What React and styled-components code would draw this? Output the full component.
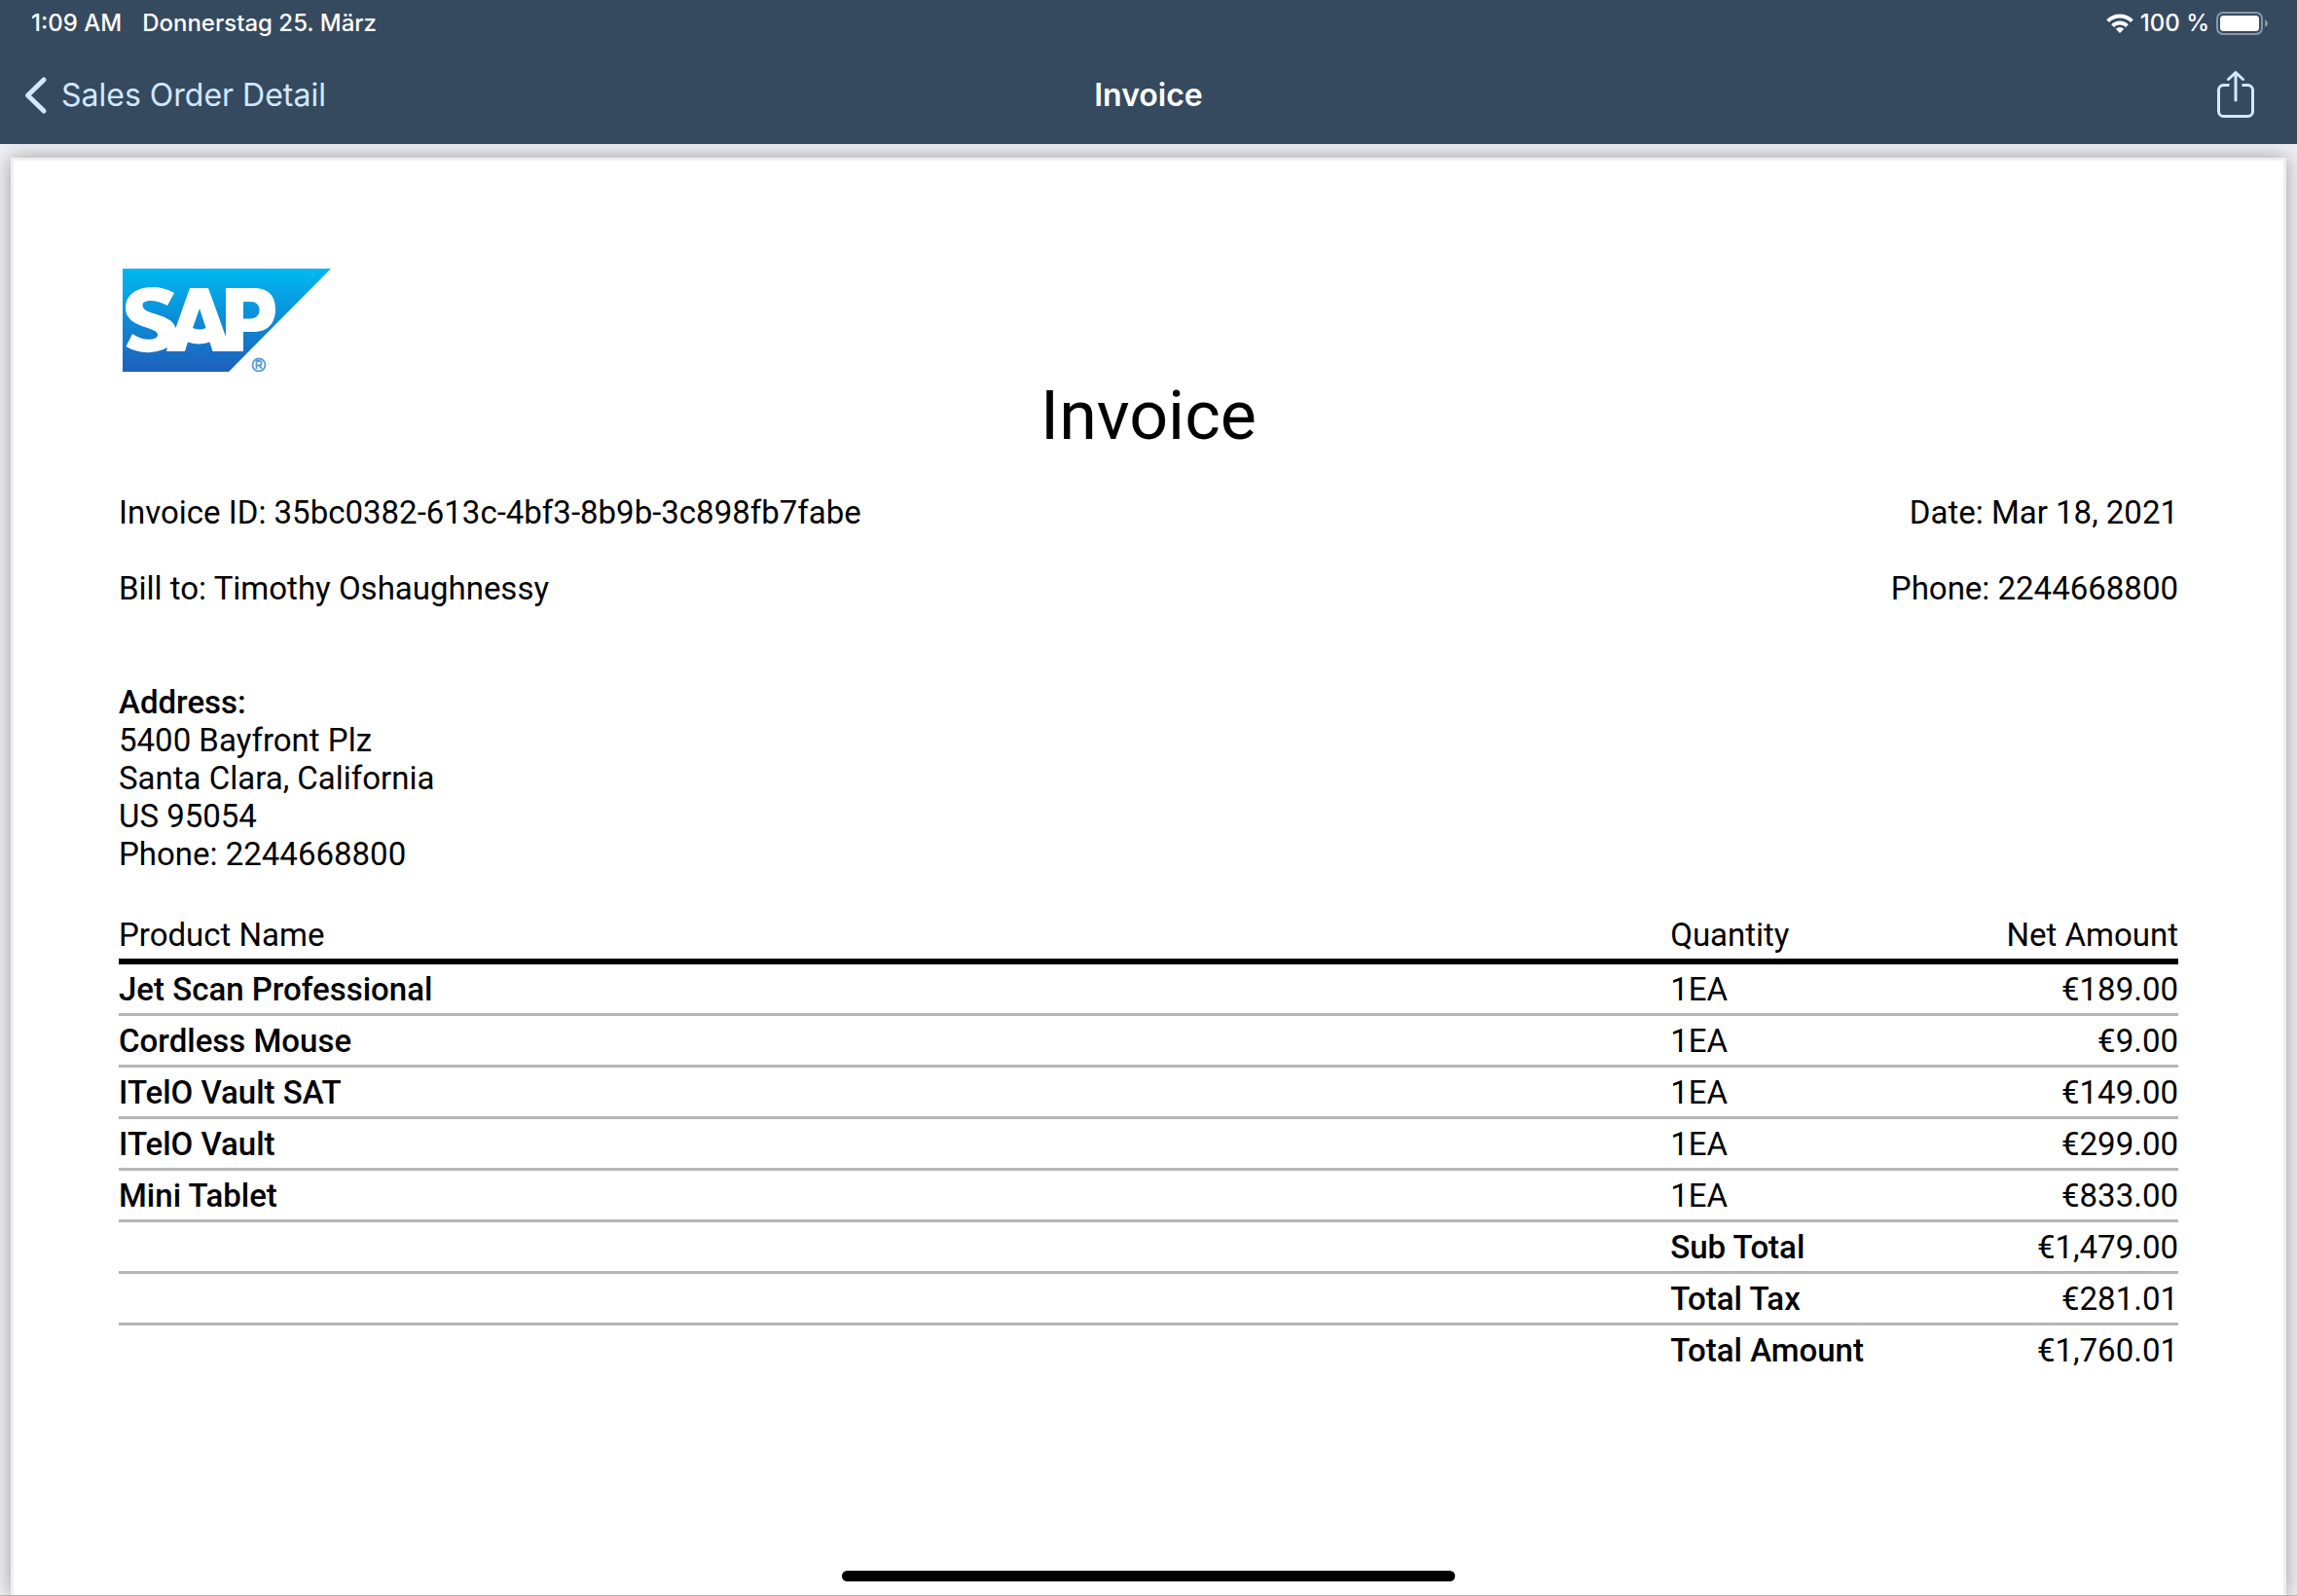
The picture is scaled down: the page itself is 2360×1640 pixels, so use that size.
import React from "react";
import styled, { createGlobalStyle } from "styled-components";

const GlobalStyle = createGlobalStyle`
  *, *::before, *::after { box-sizing: border-box; }
  html, body, #root { height: 100%; }
  body { margin: 0; background: #efeff4; }
`;

const Screen = styled.div`
  height: 100%;
  display: flex;
  flex-direction: column;
  overflow: hidden;
  background: #efeff4;
  color: #000;
  font-family: Roboto, sans-serif;
  font-size: 33px;
  line-height: 39px;
`;

const TopBar = styled.header`
  flex: none;
  background: #354a5f;
  color: #fff;
  font-family: Inter, sans-serif;
  position: relative;
  z-index: 1;
`;

const StatusBar = styled.div`
  display: flex;
  justify-content: space-between;
  align-items: center;
  height: 48px;
  padding: 0 30px 0 32px;
  font-size: 24px;
  line-height: 32px;
  font-weight: 500;
`;

const StatusGroup = styled.div`
  display: flex;
  align-items: center;
  gap: ${(p) => p.$gap}px;
`;

const NavBar = styled.nav`
  display: grid;
  grid-template-columns: 1fr auto 1fr;
  align-items: center;
  height: 100px;
  padding: 0 23px;
`;

const BackButton = styled.button`
  justify-self: start;
  display: flex;
  align-items: center;
  gap: 14px;
  padding: 0;
  border: 0;
  background: none;
  color: #d1e8ff;
  font: 400 32px/48px Inter, sans-serif;
`;

const NavTitle = styled.h1`
  margin: 0;
  font-size: 32px;
  line-height: 48px;
  font-weight: 600;
`;

const ShareButton = styled.button`
  justify-self: end;
  display: flex;
  padding: 0 21px;
  border: 0;
  background: none;
  color: #d1e8ff;
`;

const Viewer = styled.main`
  flex: 1;
  min-height: 0;
  display: flex;
  padding: 14px 11px 0;
`;

const Paper = styled.article`
  flex: 1;
  padding: 111px 108px 0;
  background: #fff;
  border: 3px solid #f0f0f0;
  border-bottom: 0;
  box-shadow: 0 0 20px rgba(0, 0, 0, 0.34);
`;

const DocTitle = styled.h2`
  margin: 4px 0 0;
  text-align: center;
  font-size: 70px;
  line-height: 82px;
  font-weight: 400;
`;

const Details = styled.section`
  display: grid;
  gap: 39px;
  margin-top: 39px;
`;

const DetailRow = styled.div`
  display: flex;
  justify-content: space-between;
`;

const Address = styled.address`
  margin-top: 78px;
  font-style: normal;
`;

const AddressLine = styled.div`
  font-weight: ${(p) => (p.$strong ? 500 : 400)};
`;

const Table = styled.table`
  width: 100%;
  margin-top: 41px;
  table-layout: fixed;
  border-collapse: separate;
  border-spacing: 0;
`;

const Col = styled.col`
  width: ${(p) => p.$width};
`;

const cell = `
  height: 53px;
  white-space: nowrap;
`;

const HeadCell = styled.th`
  ${cell}
  padding: 0 0 2px ${(p) => (p.$inset ? 22 : 0)}px;
  border-bottom: 6px solid #000;
  font-weight: 400;
  text-align: ${(p) => (p.$end ? "right" : "left")};
`;

const Cell = styled.td`
  ${cell}
  padding: 1px 0 0 ${(p) => (p.$inset ? 22 : 0)}px;
  border-bottom: 3px solid ${(p) => (p.$last ? "transparent" : "#b5b5b5")};
  font-weight: ${(p) => (p.$strong ? 500 : 400)};
  text-align: ${(p) => (p.$end ? "right" : "left")};
`;

const HomeIndicator = styled.div`
  position: fixed;
  left: 50%;
  bottom: 15px;
  width: 630px;
  height: 11px;
  margin-left: -315px;
  border-radius: 6px;
  background: #000;
`;

const BottomEdge = styled.div`
  position: fixed;
  left: 0;
  right: 0;
  bottom: 0;
  height: 1px;
  background: #b2b2b2;
`;

const LogoSvg = styled.svg`
  display: block;
  margin-left: 4px;
`;

function WifiIcon() {
  return (
    <svg width="28" height="20" viewBox="0 0 28 20" fill="none" stroke="#fff" strokeWidth="4">
      <path d="M1.6 7.6a17.6 17.6 0 0 1 24.8 0" />
      <path d="M6.6 12.6a10.5 10.5 0 0 1 14.8 0" />
      <path d="M14 20l-4.2-4.2a6 6 0 0 1 8.4 0z" fill="#fff" stroke="none" />
    </svg>
  );
}

function BatteryIcon() {
  return (
    <svg width="53" height="24" viewBox="0 0 53 24">
      <rect x="1" y="1" width="46" height="22" rx="6" fill="none" stroke="#8b97a3" strokeWidth="2" />
      <rect x="4" y="4" width="40" height="16" rx="3.5" fill="#fff" />
      <path d="M50 8.2c4 1.6 4 6 0 7.6z" fill="#8b97a3" />
    </svg>
  );
}

function ChevronIcon() {
  return (
    <svg width="26" height="40" viewBox="0 0 26 40" fill="none" stroke="currentColor" strokeWidth="5" strokeLinecap="round" strokeLinejoin="round">
      <path d="M22 4L5.500 20l16.500 16" />
    </svg>
  );
}

function ShareIcon() {
  return (
    <svg width="38" height="50" viewBox="0 1 38 50" fill="none" stroke="currentColor" strokeWidth="3" strokeLinecap="round" strokeLinejoin="round">
      <path d="M12.500 15.500H6.500a5 5 0 0 0-5 5V42.500a5 5 0 0 0 5 5h25a5 5 0 0 0 5-5V20.500a5 5 0 0 0-5-5H25.500" strokeLinecap="butt" />
      <path d="M19 31V2.500M11.500 9.500l7.500-7 7.500 7" />
    </svg>
  );
}

function Logo() {
  return (
    <LogoSvg width="215" height="106" viewBox="0 0 215 106" role="img" aria-label="SAP">
      <defs>
        <linearGradient id="sap" x1="0" y1="0" x2="0" y2="1">
          <stop offset="0" stopColor="#00b9f2" />
          <stop offset="0.5" stopColor="#0d8bd6" />
          <stop offset="1" stopColor="#1e5fbb" />
        </linearGradient>
      </defs>
      <path d="M0 0H214L109 106H0z" fill="url(#sap)" />
      <path
        fill="#fff"
        fillRule="evenodd"
        d="M53 25C43 19 33 18 24 19.500C10 21.500 3 30 3 40C3 51 11 56 21 59.500C30 62.500 36 64 36 68C36 74 21 75 10 67L3.500 80C16 88 34 88 46 81L45 85H64L67 75.500C74 78 82 78 89.500 75.500L92.500 85H124V65H135C149 65 157 56 157 42C157 27 149 20 134 20H106V70L88 20H69L54.500 61C52 53 44 50 35 47C28 45 21 43 20.500 38C20 32 33 31 46 38zM79 41L85.500 61C81 63 76.500 63 72 61zM124 34H131C137 34 140.500 37 140.500 42.500C140.500 48 137 51.500 131 51.500H124z"
      />
      <circle cx="140" cy="99" r="6.500" fill="none" stroke="#5a9bd8" strokeWidth="1.800" />
      <path d="M137.500 103v-8h3a2.200 2.200 0 0 1 0 4.400h-3M140.500 99.400l2.500 3.600" fill="none" stroke="#5a9bd8" strokeWidth="1.800" />
    </LogoSvg>
  );
}

const address = ["5400 Bayfront Plz", "Santa Clara, California", "US 95054", "Phone: 2244668800"];

const products = [
  ["Jet Scan Professional", "1EA", "€189.00"],
  ["Cordless Mouse", "1EA", "€9.00"],
  ["ITelO Vault SAT", "1EA", "€149.00"],
  ["ITelO Vault", "1EA", "€299.00"],
  ["Mini Tablet", "1EA", "€833.00"],
];

const totals = [
  ["Sub Total", "€1,479.00"],
  ["Total Tax", "€281.01"],
  ["Total Amount", "€1,760.01"],
];

export default function App() {
  return (
    <Screen>
      <GlobalStyle />
      <TopBar>
        <StatusBar>
          <StatusGroup $gap={21}>
            <span>1:09 AM</span>
            <span>Donnerstag 25. März</span>
          </StatusGroup>
          <StatusGroup $gap={7}>
            <WifiIcon />
            <span>100 %</span>
            <BatteryIcon />
          </StatusGroup>
        </StatusBar>
        <NavBar>
          <BackButton type="button">
            <ChevronIcon />
            Sales Order Detail
          </BackButton>
          <NavTitle>Invoice</NavTitle>
          <ShareButton type="button" aria-label="Share">
            <ShareIcon />
          </ShareButton>
        </NavBar>
      </TopBar>
      <Viewer>
        <Paper>
          <Logo />
          <DocTitle>Invoice</DocTitle>
          <Details>
            <DetailRow>
              <span>Invoice ID: 35bc0382-613c-4bf3-8b9b-3c898fb7fabe</span>
              <span>Date: Mar 18, 2021</span>
            </DetailRow>
            <DetailRow>
              <span>Bill to: Timothy Oshaughnessy</span>
              <span>Phone: 2244668800</span>
            </DetailRow>
          </Details>
          <Address>
            <AddressLine $strong>Address:</AddressLine>
            {address.map((line) => (
              <AddressLine key={line}>{line}</AddressLine>
            ))}
          </Address>
          <Table>
            <colgroup>
              <Col $width="74.3%" />
              <Col $width="11.5%" />
              <Col $width="14.2%" />
            </colgroup>
            <thead>
              <tr>
                <HeadCell scope="col">Product Name</HeadCell>
                <HeadCell scope="col" $inset>Quantity</HeadCell>
                <HeadCell scope="col" $end>Net Amount</HeadCell>
              </tr>
            </thead>
            <tbody>
              {products.map(([name, quantity, amount]) => (
                <tr key={name}>
                  <Cell $strong>{name}</Cell>
                  <Cell $inset>{quantity}</Cell>
                  <Cell $end>{amount}</Cell>
                </tr>
              ))}
              {totals.map(([label, amount], i) => (
                <tr key={label}>
                  <Cell $last={i === totals.length - 1} />
                  <Cell $inset $strong $last={i === totals.length - 1}>{label}</Cell>
                  <Cell $end $last={i === totals.length - 1}>{amount}</Cell>
                </tr>
              ))}
            </tbody>
          </Table>
        </Paper>
      </Viewer>
      <BottomEdge />
      <HomeIndicator />
    </Screen>
  );
}
